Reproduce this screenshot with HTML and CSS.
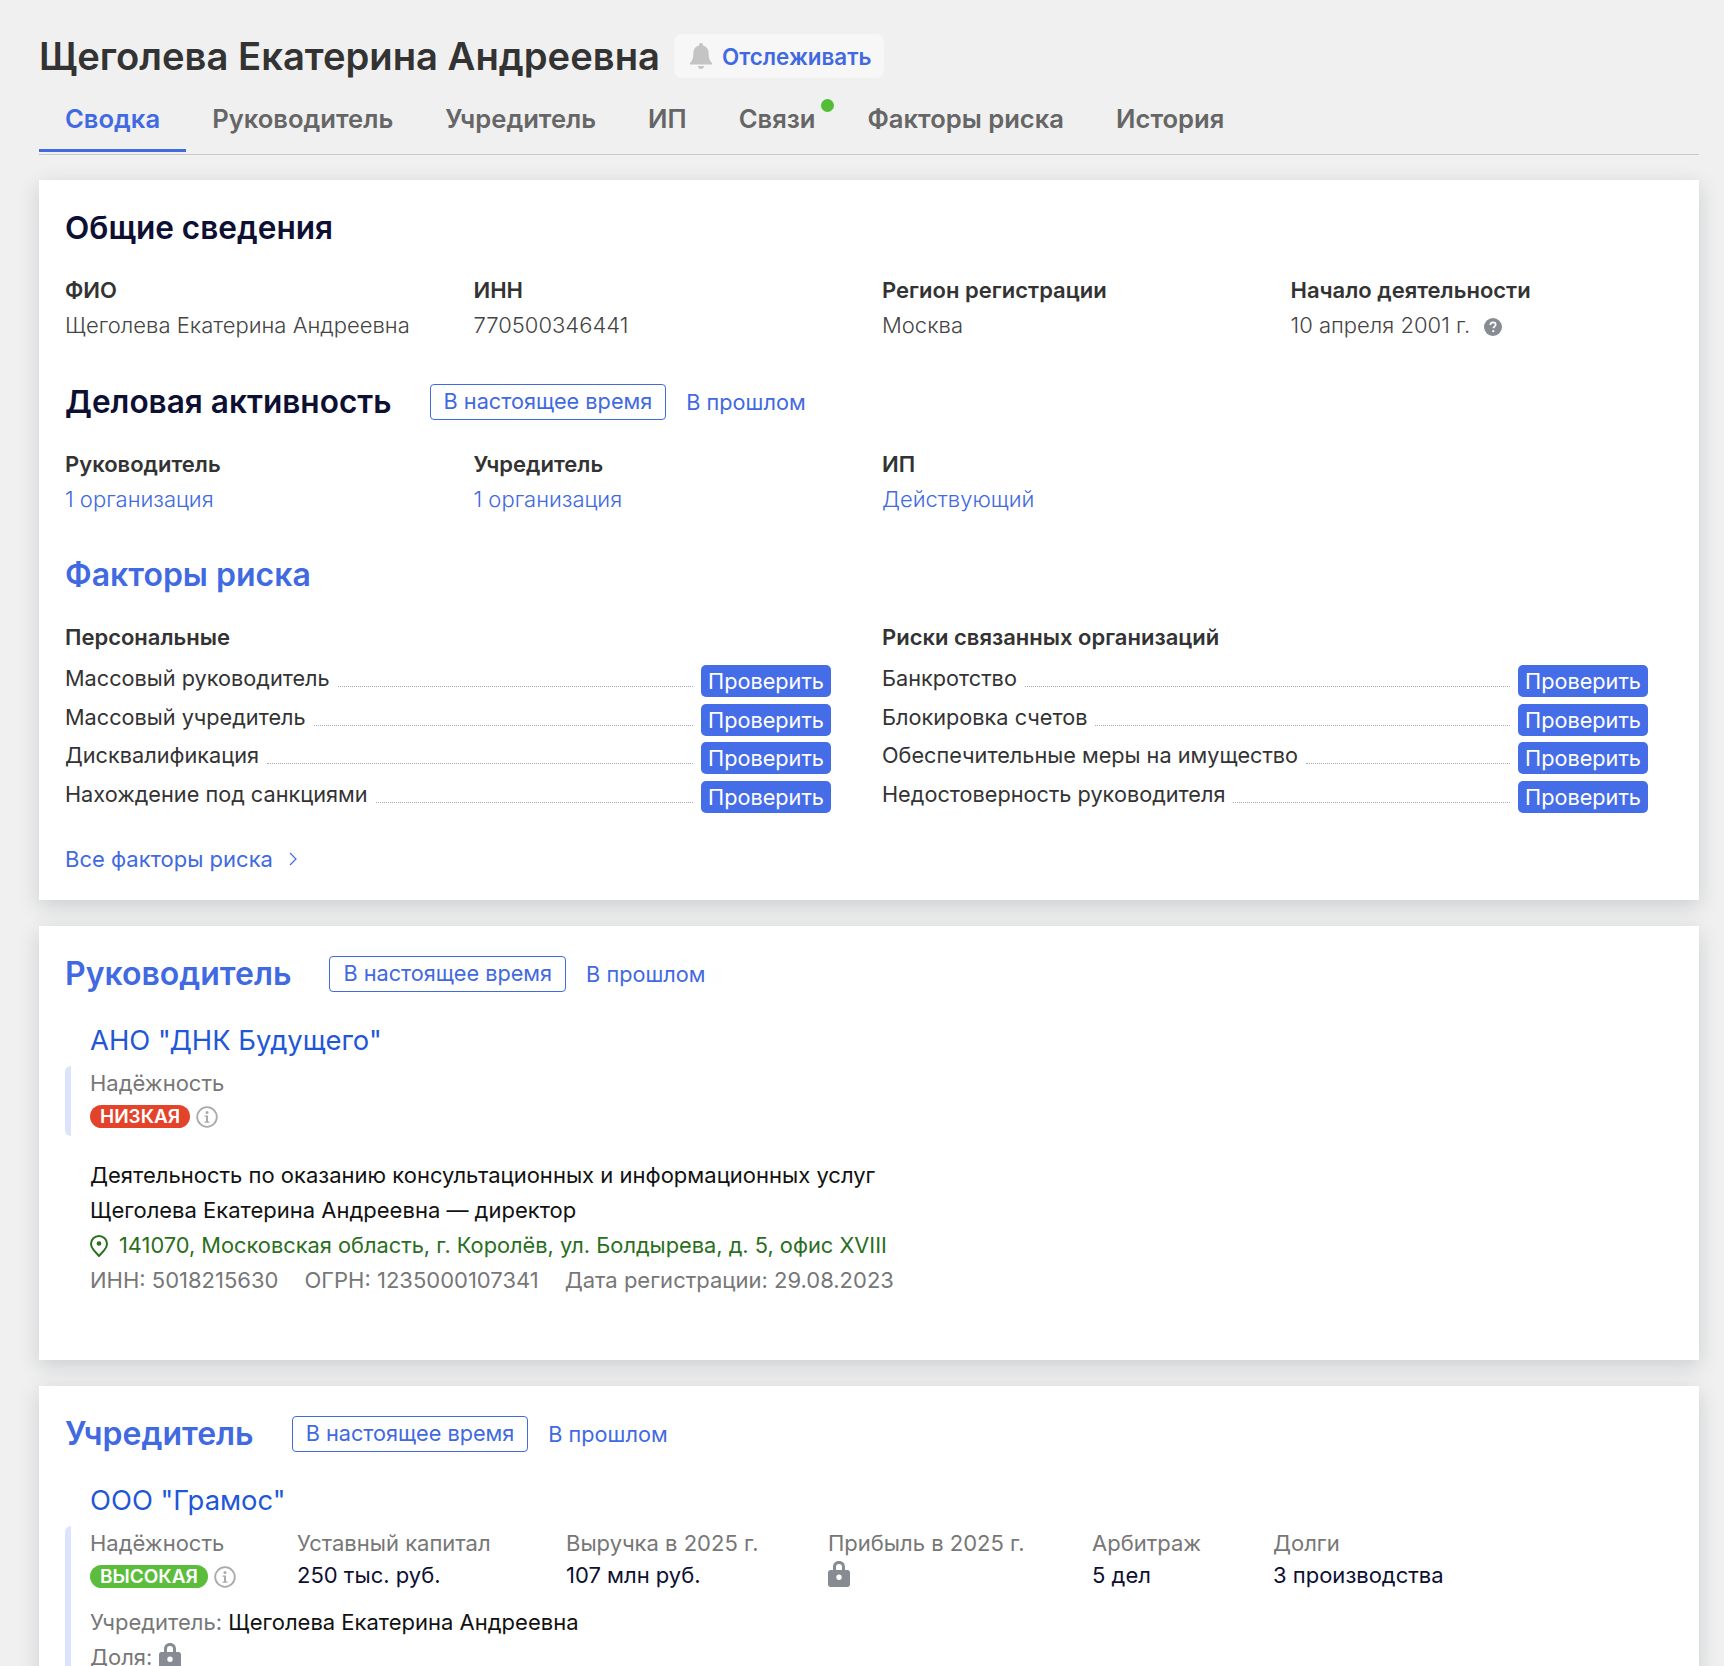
FILE: index.html
```html
<!DOCTYPE html>
<html lang="ru">

<head>
    <meta charset="UTF-8">
    <title>Щеголева Екатерина Андреевна</title>
    <link rel="stylesheet" href="styles.css">
</head>

<body>
    <header class="head">
        <h1 class="person">Щеголева Екатерина Андреевна</h1>
        <a class="follow">
            <svg class="bell" viewBox="0 0 22 26"><path d="M11 0c1.200 0 2 .9 2 2v.6c3.600.9 5.600 3.900 5.600 7.700 0 4.700 1 7.400 3.400 9.700v1.500H0V20c2.400-2.300 3.400-5 3.400-9.700 0-3.800 2-6.800 5.600-7.700V2c0-1.100.8-2 2-2z"/><path d="M8 23h6c0 1.700-1.300 3-3 3s-3-1.300-3-3z"/></svg>
            Отслеживать
        </a>
    </header>

    <nav class="tabs">
        <a class="tab active">Сводка</a>
        <a class="tab">Руководитель</a>
        <a class="tab">Учредитель</a>
        <a class="tab">ИП</a>
        <a class="tab">Связи<span class="dot"></span></a>
        <a class="tab">Факторы риска</a>
        <a class="tab">История</a>
    </nav>

    <section class="card card-main">
        <h2 class="title title-first">Общие сведения</h2>
        <div class="cols">
            <div><div class="label">ФИО</div><div class="value">Щеголева Екатерина Андреевна</div></div>
            <div><div class="label">ИНН</div><div class="value">770500346441</div></div>
            <div><div class="label">Регион регистрации</div><div class="value">Москва</div></div>
            <div>
                <div class="label">Начало деятельности</div>
                <div class="value">10 апреля 2001 г.
                    <svg class="help" viewBox="0 0 18 18"><circle cx="9" cy="9" r="9" fill="#868b94"/><path d="M6.300 7c.1-1.700 1.200-2.600 2.800-2.600 1.500 0 2.600.9 2.600 2.200 0 1-.5 1.600-1.400 2.200-.7.500-.9.800-.9 1.500" fill="none" stroke="#fff" stroke-width="1.700"/><circle cx="9.300" cy="13.200" r="1.100" fill="#fff"/></svg>
                </div>
            </div>
        </div>

        <div class="title-row title-row-business">
            <h2 class="title">Деловая активность</h2>
            <a class="toggle">В настоящее время</a>
            <a class="toggle-off">В прошлом</a>
        </div>
        <div class="cols">
            <div><div class="label">Руководитель</div><a class="value link">1 организация</a></div>
            <div><div class="label">Учредитель</div><a class="value link">1 организация</a></div>
            <div><div class="label">ИП</div><a class="value link">Действующий</a></div>
        </div>

        <h2 class="title title-blue title-risk">Факторы риска</h2>
        <div class="risks">
            <div>
                <div class="label">Персональные</div>
                <div class="risk"><span>Массовый руководитель</span><i></i><a class="check">Проверить</a></div>
                <div class="risk"><span>Массовый учредитель</span><i></i><a class="check">Проверить</a></div>
                <div class="risk"><span>Дисквалификация</span><i></i><a class="check">Проверить</a></div>
                <div class="risk"><span>Нахождение под санкциями</span><i></i><a class="check">Проверить</a></div>
            </div>
            <div>
                <div class="label">Риски связанных организаций</div>
                <div class="risk"><span>Банкротство</span><i></i><a class="check">Проверить</a></div>
                <div class="risk"><span>Блокировка счетов</span><i></i><a class="check">Проверить</a></div>
                <div class="risk"><span>Обеспечительные меры на имущество</span><i></i><a class="check">Проверить</a></div>
                <div class="risk"><span>Недостоверность руководителя</span><i></i><a class="check">Проверить</a></div>
            </div>
        </div>
        <a class="all-risks">Все факторы риска
            <svg class="chev" viewBox="0 0 8 14"><path d="M1 1l6 6-6 6" fill="none" stroke="#4169e1" stroke-width="1.200"/></svg>
        </a>
    </section>

    <section class="card card-head">
        <div class="title-row">
            <h2 class="title title-blue">Руководитель</h2>
            <a class="toggle">В настоящее время</a>
            <a class="toggle-off">В прошлом</a>
        </div>
        <div class="org">
            <a class="org-name">АНО "ДНК Будущего"</a>
            <div class="org-stats org-stats-short">
                <div>
                    <div class="muted">Надёжность</div>
                    <div class="rating">
                        <span class="badge badge-low">НИЗКАЯ</span>
                        <svg class="info" viewBox="0 0 22 22"><circle cx="11" cy="11" r="9.800" fill="none" stroke="#aaa" stroke-width="1.800"/><circle cx="11" cy="6.500" r="1.500" fill="#aaa"/><path d="M8.500 9.500h3.500v6h1.500v1.300h-5v-1.300H10v-4.700H8.500z" fill="#aaa"/></svg>
                    </div>
                </div>
            </div>
            <div class="line line-first">Деятельность по оказанию консультационных и информационных услуг</div>
            <div class="line">Щеголева Екатерина Андреевна — директор</div>
            <div class="line address">
                <svg class="pin" viewBox="0 0 18 22"><path d="M9 1c4.400 0 8 3.400 8 7.700 0 2.500-1.100 4.500-2.700 6.500L9 21l-5.300-5.800C2.100 13.200 1 11.200 1 8.700 1 4.400 4.600 1 9 1z" fill="none" stroke="#2b6e1e" stroke-width="2"/><circle cx="9" cy="8.500" r="2.300" fill="#2b6e1e"/></svg>
                141070, Московская область, г. Королёв, ул. Болдырева, д. 5, офис XVIII
            </div>
            <div class="line muted ids">
                <span>ИНН: 5018215630</span><span>ОГРН: 1235000107341</span><span>Дата регистрации: 29.08.2023</span>
            </div>
        </div>
    </section>

    <section class="card">
        <div class="title-row">
            <h2 class="title title-blue">Учредитель</h2>
            <a class="toggle">В настоящее время</a>
            <a class="toggle-off">В прошлом</a>
        </div>
        <div class="org">
            <a class="org-name">ООО "Грамос"</a>
            <div class="org-stats">
                <div>
                    <div class="muted">Надёжность</div>
                    <div class="rating">
                        <span class="badge badge-high">ВЫСОКАЯ</span>
                        <svg class="info" viewBox="0 0 22 22"><circle cx="11" cy="11" r="9.800" fill="none" stroke="#aaa" stroke-width="1.800"/><circle cx="11" cy="6.500" r="1.500" fill="#aaa"/><path d="M8.500 9.500h3.500v6h1.500v1.300h-5v-1.300H10v-4.700H8.500z" fill="#aaa"/></svg>
                    </div>
                </div>
                <div><div class="muted">Уставный капитал</div><div class="stat">250 тыс. руб.</div></div>
                <div><div class="muted">Выручка в 2025 г.</div><div class="stat">107 млн руб.</div></div>
                <div>
                    <div class="muted">Прибыль в 2025 г.</div>
                    <div class="stat">
                        <svg class="lock" viewBox="0 0 22 26"><path fill-rule="evenodd" d="M11 0c3.700 0 6 2.600 6 6v3h2.500c1.400 0 2.500 1.100 2.500 2.500v12c0 1.400-1.100 2.500-2.500 2.500h-17C1.100 26 0 24.900 0 23.500v-12C0 10.100 1.100 9 2.500 9H5V6c0-3.400 2.300-6 6-6zm0 3C9 3 8 4.300 8 6v3h6V6c0-1.700-1-3-3-3zm0 10.500a2.700 2.700 0 1 0 0 5.400 2.700 2.700 0 0 0 0-5.400z" fill="#868b94"/></svg>
                    </div>
                </div>
                <div><div class="muted">Арбитраж</div><div class="stat">5 дел</div></div>
                <div><div class="muted">Долги</div><div class="stat">3 производства</div></div>
            </div>
            <div class="line line-founder"><span class="muted">Учредитель:</span> Щеголева Екатерина Андреевна</div>
            <div class="line"><span class="muted">Доля:</span>
                <svg class="lock" viewBox="0 0 22 26"><path fill-rule="evenodd" d="M11 0c3.700 0 6 2.600 6 6v3h2.500c1.400 0 2.500 1.100 2.500 2.500v12c0 1.400-1.100 2.500-2.500 2.500h-17C1.100 26 0 24.900 0 23.500v-12C0 10.100 1.100 9 2.500 9H5V6c0-3.400 2.300-6 6-6zm0 3C9 3 8 4.300 8 6v3h6V6c0-1.700-1-3-3-3zm0 10.500a2.700 2.700 0 1 0 0 5.400 2.700 2.700 0 0 0 0-5.400z" fill="#868b94"/></svg>
            </div>
        </div>
    </section>
</body>

</html>
```

FILE: styles.css
```css
html,
body {
    height: 1666px;
    overflow: hidden;
}

body {
    margin: 0;
    padding: 34px 25px 0 39px;
    background: #f0f0f0;
    color: #333;
    font-family: Inter, "Noto Sans", sans-serif;
    font-size: 22px;
    line-height: 35px;
}

h1,
h2 {
    margin: 0;
}

.head {
    display: flex;
    align-items: center;
    gap: 14px;
    height: 44px;
}

.person {
    font-size: 38.2px;
    font-weight: 600;
    line-height: 44px;
    white-space: nowrap;
    color: #333;
}

.follow {
    display: flex;
    align-items: center;
    gap: 10px;
    height: 44px;
    padding: 0 12px 0 16px;
    background: #f7f7f7;
    border-radius: 8px;
    color: #4169e1;
    font-weight: 600;
    font-size: 22.4px;
}

.bell {
    width: 22px;
    height: 26px;
    fill: #c4c4c4;
}

.tabs {
    display: flex;
    height: 77px;
    box-sizing: border-box;
    border-bottom: 1px solid #c8c8c8;
}

.tab {
    position: relative;
    height: 74px;
    box-sizing: border-box;
    padding: 0 26px;
    line-height: 82px;
    font-size: 25.6px;
    font-weight: 600;
    color: #666;
}

.tab.active {
    color: #4169e1;
    border-bottom: 3px solid #4169e1;
}

.dot {
    position: absolute;
    top: 21px;
    right: 7px;
    width: 13px;
    height: 13px;
    border-radius: 50%;
    background: #52bd35;
}

.card {
    width: 1660px;
    box-sizing: border-box;
    margin-top: 26px;
    padding: 0 26px;
    background: #fff;
    box-shadow: 0 6px 20px rgba(60, 70, 80, .2);
}

.card-main {
    height: 720px;
    margin-top: 25px;
}

.card-head {
    height: 434px;
}

.title {
    font-size: 31.6px;
    font-weight: 600;
    line-height: 40px;
    color: #0d1033;
}

.title-first {
    padding-top: 28px;
}

.title-blue {
    font-size: 32px;
    color: #4169e1;
}

.title-row {
    display: flex;
    align-items: center;
    padding-top: 28px;
}

.title-row-business {
    padding-top: 39px;
}

.title-risk {
    padding-top: 38px;
}

.toggle {
    height: 36px;
    box-sizing: border-box;
    margin-left: 38px;
    padding: 0 13px;
    border: 1px solid #4169e1;
    border-radius: 4px;
    font-size: 21.7px;
    line-height: 33px;
    color: #4169e1;
}

.toggle-off {
    margin-left: 20px;
    font-size: 21.7px;
    color: #4169e1;
}

.cols {
    display: grid;
    grid-template-columns: repeat(4, 408.5px);
    margin-right: -26px;
    padding-top: 25px;
}

.label {
    font-weight: 600;
    color: #333;
}

.value {
    display: block;
    font-weight: 300;
    color: #444;
}

.link {
    color: #4169e1;
}

.help {
    width: 18px;
    height: 18px;
    margin-left: 8px;
    vertical-align: -3px;
}

.risks {
    display: grid;
    grid-template-columns: 766px 766px;
    gap: 51px;
    padding-top: 25px;
}

.risks .label {
    margin-bottom: 7px;
}

.risk {
    display: flex;
    align-items: flex-end;
    height: 38.4px;
    font-size: 21.7px;
}

.risk span {
    padding-right: 8px;
    padding-bottom: 9px;
    line-height: 26px;
    white-space: nowrap;
}

.risk i {
    flex: 1;
    margin-bottom: 13px;
    border-bottom: 1px dotted #aaa;
}

.check {
    flex: none;
    width: 130px;
    height: 32px;
    box-sizing: border-box;
    margin-bottom: 3px;
    margin-left: 8px;
    background: #466de8;
    border-radius: 5px;
    color: #fff;
    line-height: 32px;
    text-align: center;
}

.all-risks {
    display: flex;
    align-items: center;
    gap: 16px;
    margin-top: 26px;
    color: #4169e1;
}

.chev {
    width: 8px;
    height: 14px;
}

.org {
    padding-left: 25px;
}

.org-name {
    display: block;
    margin-top: 26px;
    font-size: 27.4px;
    line-height: 40px;
    color: #1f57d6;
}

.org-stats {
    display: grid;
    grid-template-columns: 207px 269px 262px 264px 181px auto;
    position: relative;
    margin-top: 6px;
    min-height: 70px;
}

.org-stats::before {
    content: "";
    position: absolute;
    top: 0;
    bottom: -90px;
    left: -25px;
    width: 6px;
    background: #dde3fb;
    border-radius: 6px 0 0 6px;
}

.org-stats-short::before {
    bottom: 0;
}

.muted {
    color: #777;
}

.rating {
    display: flex;
    align-items: center;
    gap: 6px;
    height: 31px;
}

.badge {
    height: 23px;
    padding: 0 10px;
    border-radius: 12px;
    color: #fff;
    font-size: 19px;
    font-weight: 600;
    line-height: 23px;
}

.badge-low {
    background: #e4432b;
}

.badge-high {
    background: #5cbd3c;
}

.info {
    width: 22px;
    height: 22px;
}

.stat {
    height: 32px;
    margin-top: -3px;
    color: #0d1033;
}

.line {
    color: #111;
}

.line-first {
    margin-top: 22px;
}

.line-founder {
    margin-top: 9px;
}

.address {
    display: flex;
    align-items: center;
    gap: 11px;
    font-size: 21.8px;
    color: #2b6e1e;
}

.pin {
    width: 18px;
    height: 22px;
}

.ids {
    display: flex;
    gap: 26px;
    color: #777;
}

.lock {
    width: 22px;
    height: 26px;
    vertical-align: -4px;
}
```
